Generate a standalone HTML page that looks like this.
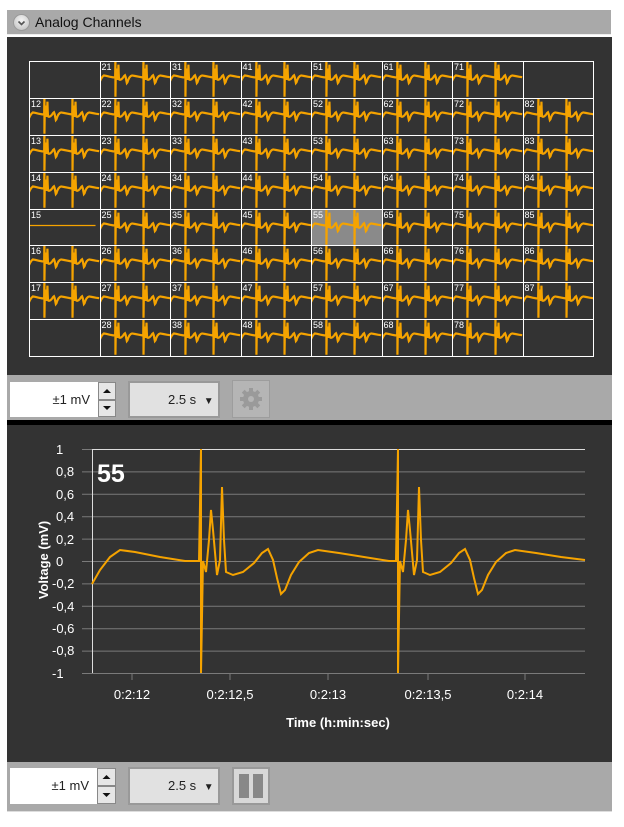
<!DOCTYPE html>
<html><head><meta charset="utf-8">
<style>
*{margin:0;padding:0;box-sizing:border-box}
body{width:624px;height:827px;background:#fff;position:relative;overflow:hidden;font-family:"Liberation Sans",sans-serif}
.a{position:absolute}
#hdr{left:7px;top:10px;width:604px;height:25px;background:#a9a9a9;border-bottom:1px solid #eee}
#hdr .t{left:28px;top:4px;font-size:14px;color:#111}
#hdr .b{left:6px;top:4px;width:17px;height:17px;border-radius:50%;background:radial-gradient(circle at 50% 35%,#f4f4f4,#bdbdbd);border:1px solid #9a9a9a}
#top{left:7px;top:37px;width:605px;height:338px;background:#333}
#grid{left:29px;top:61px;width:565px;height:296px;background:#fff;border:1px solid #fff;display:grid;grid-template-columns:repeat(8,1fr);grid-template-rows:repeat(8,1fr);gap:1px}
.c{background:#333;position:relative;overflow:hidden}
.c span{position:absolute;left:1px;top:0;font-size:9px;color:#fff;z-index:2}
.c svg{position:absolute;left:0;top:0;width:100%;height:100%}
.h{background:#8a8a8a}
.tb{left:7px;width:605px;background:#a9a9a9}
.spin{background:#fff;font-size:13px;color:#222;text-align:right;padding-right:8px}
.arr{background:#e6e6e6;border:1px solid #888}
.dd{background:#e1e1e1;border:2px solid #999;font-size:13px;color:#222}
#chart{left:7px;top:425px;width:605px;height:337px;background:#333}
</style></head><body>
<div id="hdr" class="a"><div class="b a"><svg width="17" height="17" style="position:absolute;left:-1px;top:-1px"><path d="M5.5 7.5l3 3 3-3" fill="none" stroke="#555" stroke-width="1.6"/></svg></div><div class="t a">Analog Channels</div></div>
<div id="top" class="a"></div>
<svg width="0" height="0" style="position:absolute">
<defs>
<path id="w" fill="none" stroke="#f5a300" vector-effect="non-scaling-stroke" d="M92,584 L100,570 L110,557 L120,550 L135,552 L160,557 L185,561 L199,561 L201,449 L201,673 L203,561 L206,572 L209,540 L211,510 L213,530 L217,575 L220,560 L222,487 L224,540 L226,572 L233,575 L243,572 L254,563 L262,553 L268,549 L273,560 L277,578 L281,594 L285,590 L291,575 L299,562 L309,553 L318,550 L339,553 L364,557 L389,561 L396,561 L398,449 L398,673 L400,561 L403,572 L406,540 L408,510 L410,530 L414,575 L417,560 L419,487 L421,540 L423,572 L430,575 L440,572 L451,563 L459,553 L465,549 L470,560 L474,578 L478,594 L482,590 L488,575 L496,562 L506,553 L515,550 L536,553 L561,557 L585,560"/>
<symbol id="m" viewBox="0 0 70 37"><g transform="translate(-15.5,-84) scale(0.147,0.178)"><use href="#w" stroke-width="2.2"/></g></symbol>
</defs></svg>
<div id="grid" class="a">
<div class="c"></div><div class="c"><span>21</span><svg><use href="#m"/></svg></div><div class="c"><span>31</span><svg><use href="#m"/></svg></div><div class="c"><span>41</span><svg><use href="#m"/></svg></div><div class="c"><span>51</span><svg><use href="#m"/></svg></div><div class="c"><span>61</span><svg><use href="#m"/></svg></div><div class="c"><span>71</span><svg><use href="#m"/></svg></div><div class="c"></div>
<div class="c"><span>12</span><svg><use href="#m"/></svg></div><div class="c"><span>22</span><svg><use href="#m"/></svg></div><div class="c"><span>32</span><svg><use href="#m"/></svg></div><div class="c"><span>42</span><svg><use href="#m"/></svg></div><div class="c"><span>52</span><svg><use href="#m"/></svg></div><div class="c"><span>62</span><svg><use href="#m"/></svg></div><div class="c"><span>72</span><svg><use href="#m"/></svg></div><div class="c"><span>82</span><svg><use href="#m"/></svg></div>
<div class="c"><span>13</span><svg><use href="#m"/></svg></div><div class="c"><span>23</span><svg><use href="#m"/></svg></div><div class="c"><span>33</span><svg><use href="#m"/></svg></div><div class="c"><span>43</span><svg><use href="#m"/></svg></div><div class="c"><span>53</span><svg><use href="#m"/></svg></div><div class="c"><span>63</span><svg><use href="#m"/></svg></div><div class="c"><span>73</span><svg><use href="#m"/></svg></div><div class="c"><span>83</span><svg><use href="#m"/></svg></div>
<div class="c"><span>14</span><svg><use href="#m"/></svg></div><div class="c"><span>24</span><svg><use href="#m"/></svg></div><div class="c"><span>34</span><svg><use href="#m"/></svg></div><div class="c"><span>44</span><svg><use href="#m"/></svg></div><div class="c"><span>54</span><svg><use href="#m"/></svg></div><div class="c"><span>64</span><svg><use href="#m"/></svg></div><div class="c"><span>74</span><svg><use href="#m"/></svg></div><div class="c"><span>84</span><svg><use href="#m"/></svg></div>
<div class="c"><span>15</span><svg viewBox="0 0 70 37" preserveAspectRatio="none"><line x1="0" y1="16" x2="66" y2="16" stroke="#f5a300" stroke-width="1.3"/></svg></div><div class="c"><span>25</span><svg><use href="#m"/></svg></div><div class="c"><span>35</span><svg><use href="#m"/></svg></div><div class="c"><span>45</span><svg><use href="#m"/></svg></div><div class="c h"><span>55</span><svg><use href="#m"/></svg></div><div class="c"><span>65</span><svg><use href="#m"/></svg></div><div class="c"><span>75</span><svg><use href="#m"/></svg></div><div class="c"><span>85</span><svg><use href="#m"/></svg></div>
<div class="c"><span>16</span><svg><use href="#m"/></svg></div><div class="c"><span>26</span><svg><use href="#m"/></svg></div><div class="c"><span>36</span><svg><use href="#m"/></svg></div><div class="c"><span>46</span><svg><use href="#m"/></svg></div><div class="c"><span>56</span><svg><use href="#m"/></svg></div><div class="c"><span>66</span><svg><use href="#m"/></svg></div><div class="c"><span>76</span><svg><use href="#m"/></svg></div><div class="c"><span>86</span><svg><use href="#m"/></svg></div>
<div class="c"><span>17</span><svg><use href="#m"/></svg></div><div class="c"><span>27</span><svg><use href="#m"/></svg></div><div class="c"><span>37</span><svg><use href="#m"/></svg></div><div class="c"><span>47</span><svg><use href="#m"/></svg></div><div class="c"><span>57</span><svg><use href="#m"/></svg></div><div class="c"><span>67</span><svg><use href="#m"/></svg></div><div class="c"><span>77</span><svg><use href="#m"/></svg></div><div class="c"><span>87</span><svg><use href="#m"/></svg></div>
<div class="c"></div><div class="c"><span>28</span><svg><use href="#m"/></svg></div><div class="c"><span>38</span><svg><use href="#m"/></svg></div><div class="c"><span>48</span><svg><use href="#m"/></svg></div><div class="c"><span>58</span><svg><use href="#m"/></svg></div><div class="c"><span>68</span><svg><use href="#m"/></svg></div><div class="c"><span>78</span><svg><use href="#m"/></svg></div><div class="c"></div>
</div>

<div class="a tb" style="top:375px;height:45px"></div>
<div class="a spin" style="left:10px;top:382px;width:88px;height:35px;line-height:35px">±1 mV</div>
<div class="a arr" style="left:98px;top:382px;width:18px;height:18px"><svg width="16" height="16"><path d="M4 10l4-4 4 4z" fill="#111"/></svg></div>
<div class="a arr" style="left:98px;top:400px;width:18px;height:17px"><svg width="16" height="15"><path d="M4 5l4 4 4-4z" fill="#111"/></svg></div>
<div class="a dd" style="left:128px;top:381px;width:92px;height:37px;line-height:33px;padding-left:38px">2.5 s <span style="font-size:10px;margin-left:4px">▼</span></div>
<div class="a" style="left:232px;top:380px;width:38px;height:38px;background:#b5b5b5;border:1px solid #9d9d9d"><svg width="36" height="36" viewBox="0 0 36 36"><g fill="#9a9a9a"><circle cx="18" cy="18" r="8"/><g stroke="#9a9a9a" stroke-width="4"><line x1="18" y1="7" x2="18" y2="29"/><line x1="7" y1="18" x2="29" y2="18"/><line x1="10.2" y1="10.2" x2="25.8" y2="25.8"/><line x1="25.8" y1="10.2" x2="10.2" y2="25.8"/></g></g><circle cx="18" cy="18" r="3" fill="#b5b5b5"/></svg></div>
<div class="a" style="left:7px;top:420px;width:605px;height:5px;background:#000"></div>

<div id="chart" class="a"></div>
<svg class="a" style="left:0;top:0" width="624" height="827">
<g stroke="#7a7a7a" stroke-width="1">
<line x1="82" y1="449.5" x2="585" y2="449.5"/><line x1="82" y1="471.9" x2="585" y2="471.9"/><line x1="82" y1="494.3" x2="585" y2="494.3"/><line x1="82" y1="516.7" x2="585" y2="516.7"/><line x1="82" y1="539.1" x2="585" y2="539.1"/><line x1="82" y1="561.5" x2="585" y2="561.5"/><line x1="82" y1="583.9" x2="585" y2="583.9"/><line x1="82" y1="606.3" x2="585" y2="606.3"/><line x1="82" y1="628.7" x2="585" y2="628.7"/><line x1="82" y1="651.1" x2="585" y2="651.1"/><line x1="82" y1="673.5" x2="585" y2="673.5"/>
<line x1="132" y1="673" x2="132" y2="680"/><line x1="230" y1="673" x2="230" y2="680"/><line x1="328" y1="673" x2="328" y2="680"/><line x1="428" y1="673" x2="428" y2="680"/><line x1="525" y1="673" x2="525" y2="680"/>
</g>
<path d="M92.5,673 V449.5 H585" fill="none" stroke="#ddd" stroke-width="1"/>
<use href="#w" stroke-width="2"/>
<g fill="#fff" font-family="Liberation Sans, sans-serif" font-size="13">
<text x="56" y="454">1</text><text x="56" y="476">0,8</text><text x="56" y="499">0,6</text><text x="56" y="521">0,4</text><text x="56" y="544">0,2</text><text x="56" y="566">0</text><text x="52" y="588">-0,2</text><text x="52" y="611">-0,4</text><text x="52" y="633">-0,6</text><text x="52" y="655">-0,8</text><text x="52" y="678">-1</text>
<g text-anchor="middle"><text x="132" y="699">0:2:12</text><text x="230" y="699">0:2:12,5</text><text x="328" y="699">0:2:13</text><text x="428" y="699">0:2:13,5</text><text x="525" y="699">0:2:14</text>
<text x="338" y="727" font-weight="bold">Time (h:min:sec)</text>
<text transform="translate(48,560) rotate(-90)" font-weight="bold">Voltage (mV)</text></g>
<text x="97" y="482" font-size="25" font-weight="bold">55</text>
</g>
</svg>

<div class="a tb" style="top:762px;height:50px;border-bottom:1px solid #ddd"></div>
<div class="a spin" style="left:10px;top:768px;width:87px;height:36px;line-height:36px">±1 mV</div>
<div class="a arr" style="left:97px;top:768px;width:19px;height:18px"><svg width="17" height="16"><path d="M4.5 10l4-4 4 4z" fill="#111"/></svg></div>
<div class="a arr" style="left:97px;top:786px;width:19px;height:18px"><svg width="17" height="16"><path d="M4.5 6l4 4 4-4z" fill="#111"/></svg></div>
<div class="a dd" style="left:128px;top:767px;width:92px;height:38px;line-height:34px;padding-left:38px">2.5 s <span style="font-size:10px;margin-left:4px">▼</span></div>
<div class="a" style="left:232px;top:767px;width:38px;height:38px;background:#d8d8d8;border:2px solid #999"><div class="a" style="left:5px;top:5px;width:10px;height:24px;background:#888"></div><div class="a" style="left:19px;top:5px;width:10px;height:24px;background:#888"></div></div>
</body></html>
